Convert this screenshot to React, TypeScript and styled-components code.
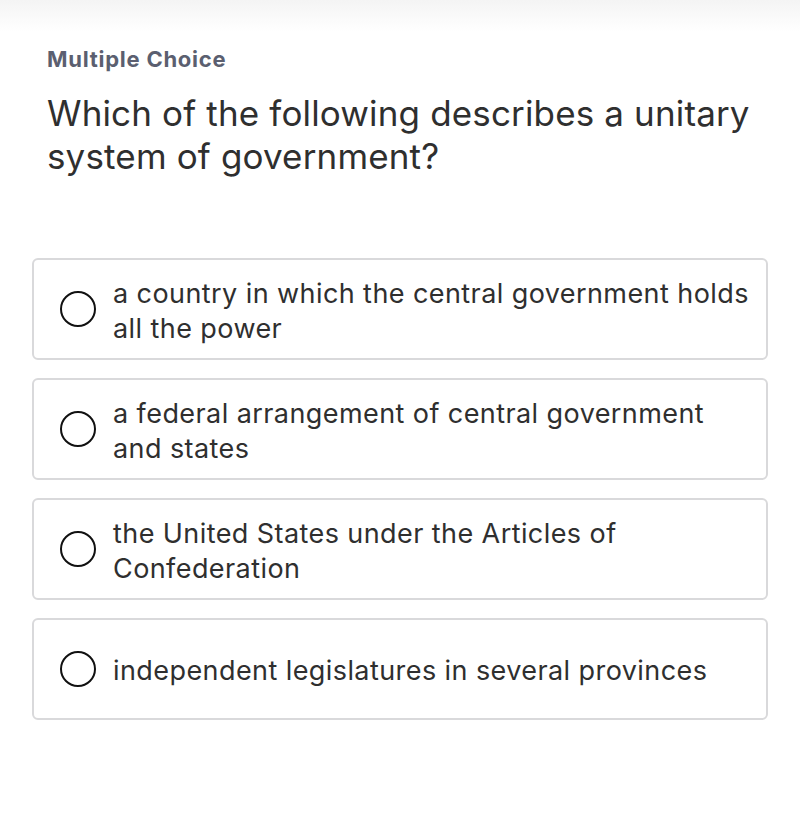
import React from "react";
import styled, { createGlobalStyle } from "styled-components";

const Global = createGlobalStyle`
  html, body { margin: 0; padding: 0; background: #fff; }
  body { font-family: Inter, "Noto Sans", sans-serif; -webkit-font-smoothing: antialiased; }
`;

const Page = styled.div`
  width: 800px;
  min-height: 828px;
  box-sizing: border-box;
  background: linear-gradient(#f4f4f4 0px, #ffffff 32px);
  padding: 44px 32px 0 32px;
  display: flex;
  flex-direction: column;
`;

const Label = styled.div`
  font-size: 22px;
  font-weight: 700;
  color: #5b5f70;
  padding-left: 15px;
  line-height: 30px;
  letter-spacing: 0.75px;
`;

const Question = styled.h1`
  margin: 18px 0 0 0;
  padding-left: 15px;
  font-size: 35px;
  font-weight: 400;
  line-height: 43px;
  color: #2f2f2f;
  letter-spacing: 0.15px;
`;

const Options = styled.div`
  margin-top: 80px;
  display: flex;
  flex-direction: column;
  gap: 18px;
`;

const Option = styled.div`
  box-sizing: border-box;
  height: 102px;
  border: 2px solid #d9d9db;
  border-radius: 6px;
  display: flex;
  align-items: center;
  padding: 0 16px 0 26px;
  gap: 17px;
  background: #fff;
`;

const Radio = styled.span`
  flex: none;
  box-sizing: border-box;
  width: 36px;
  height: 36px;
  border: 2.5px solid #111;
  border-radius: 50%;
`;

const OptionText = styled.div`
  font-size: 27px;
  line-height: 35px;
  padding-top: 3px;
  color: #2f2f2f;
  letter-spacing: 0.42px;
`;

const options = [
  "a country in which the central government holds all the power",
  "a federal arrangement of central government and states",
  "the United States under the Articles of Confederation",
  "independent legislatures in several provinces",
];

export default function App() {
  return (
    <>
      <Global />
      <Page>
        <Label>Multiple Choice</Label>
        <Question>
          Which of the following describes a unitary system of government?
        </Question>
        <Options>
          {options.map((o) => (
            <Option key={o}>
              <Radio />
              <OptionText>{o}</OptionText>
            </Option>
          ))}
        </Options>
      </Page>
    </>
  );
}
